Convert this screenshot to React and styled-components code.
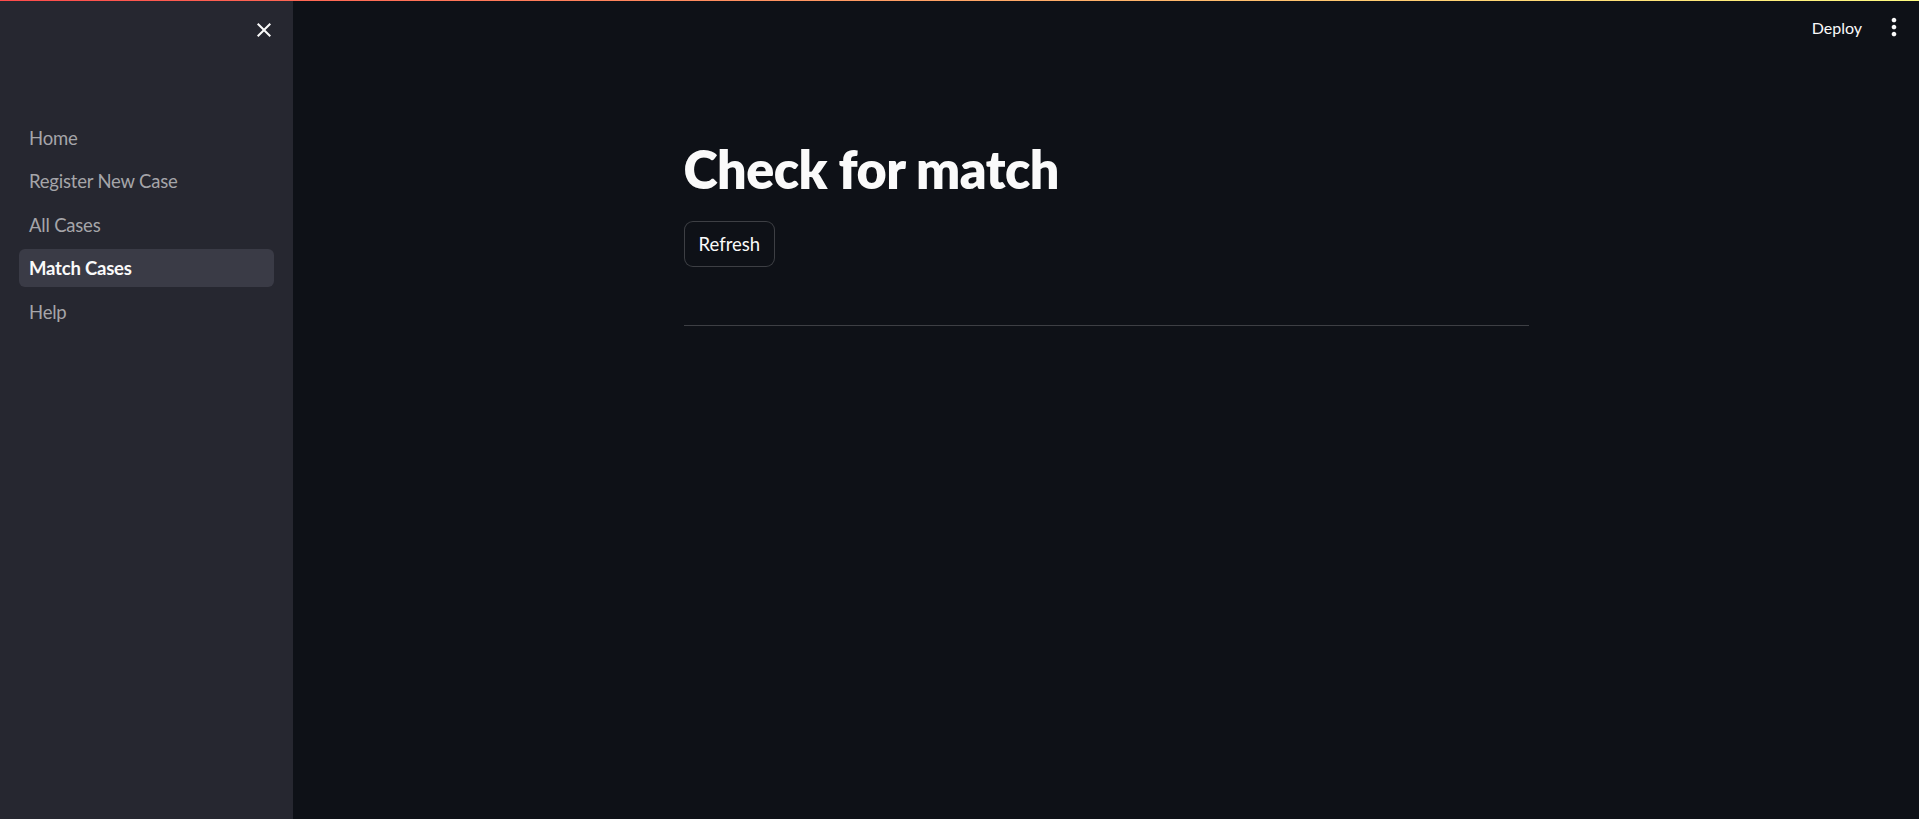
import styled, { createGlobalStyle } from "styled-components";

const GlobalStyle = createGlobalStyle`
  html, body {
    margin: 0;
    padding: 0;
    background: #0e1117;
    font-family: Lato, "Noto Sans", sans-serif;
    color: #fafafa;
  }
  * { box-sizing: border-box; }
`;

const pages = ["Home", "Register New Case", "All Cases", "Match Cases", "Help"];

const StyledShell = styled.div`
  position: relative;
  display: grid;
  grid-template-columns: 293px 1fr;
  height: 100vh;
  overflow: hidden;
`;

const StyledDecoration = styled.div`
  position: absolute;
  top: 0;
  left: 0;
  right: 0;
  height: 1px;
  background: linear-gradient(90deg, #ff4b4b, #fffd80);
  z-index: 5;
`;

const StyledSidebar = styled.aside`
  display: flex;
  flex-direction: column;
  background-color: #262730;
  padding: 0 19px;
`;

const StyledSidebarTop = styled.div`
  display: flex;
  justify-content: flex-end;
  align-items: center;
  height: 60px;
  margin-right: -2px;
`;

const StyledIconButton = styled.button`
  all: unset;
  display: flex;
  align-items: center;
  justify-content: center;
  width: ${(p) => p.$size || 24}px;
  height: ${(p) => p.$size || 24}px;
  cursor: pointer;
  color: #fafafa;
`;

const StyledNav = styled.nav`
  display: flex;
  flex-direction: column;
  gap: 5.4px;
  margin-top: 59px;
`;

const StyledNavLink = styled.a`
  display: flex;
  align-items: center;
  height: 38px;
  padding: 0 10px;
  border-radius: 6px;
  font-size: 18.5px;
  letter-spacing: -0.2px;
  text-decoration: none;
  cursor: pointer;
  color: ${(p) => (p.$active ? "#fafafa" : "#a5a5a9")};
  font-weight: ${(p) => (p.$active ? 700 : 400)};
  background-color: ${(p) => (p.$active ? "#3a3b46" : "transparent")};
  &:hover {
    background-color: #3a3b46;
  }
`;

const StyledMain = styled.main`
  display: flex;
  flex-direction: column;
  min-width: 0;
`;

const StyledHeader = styled.header`
  display: flex;
  justify-content: flex-end;
  align-items: center;
  height: 54px;
  padding-right: 11px;
  gap: 18px;
`;

const StyledDeploy = styled.button`
  all: unset;
  font-family: Lato, "Noto Sans", sans-serif;
  font-size: 16px;
  color: #fafafa;
  cursor: pointer;
`;

const StyledBlock = styled.section`
  width: 845px;
  margin: 0 auto;
  padding-top: 84px;
  display: flex;
  flex-direction: column;
  align-items: flex-start;
`;

const StyledTitle = styled.h1`
  margin: 0;
  font-size: 52px;
  line-height: 1.2;
  font-weight: 800;
  letter-spacing: -0.5px;
`;

const StyledButton = styled.button`
  margin-top: 21px;
  height: 46px;
  padding: 0 14px;
  border: 1px solid rgba(250, 250, 250, 0.2);
  border-radius: 9px;
  background-color: #0e1117;
  color: #fafafa;
  font-family: inherit;
  font-size: 18.5px;
  cursor: pointer;
  &:hover {
    border-color: #ff4b4b;
    color: #ff4b4b;
  }
`;

const StyledDivider = styled.hr`
  align-self: stretch;
  margin: 58px 0 0;
  border: none;
  border-top: 1px solid rgba(250, 250, 250, 0.2);
`;

function CloseIcon() {
  return (
    <svg width="24" height="24" viewBox="0 0 24 24" fill="currentColor">
      <path d="M19 6.41L17.59 5 12 10.59 6.41 5 5 6.41 10.59 12 5 17.59 6.41 19 12 13.41 17.59 19 19 17.59 13.41 12z" />
    </svg>
  );
}

function MoreIcon() {
  return (
    <svg width="28" height="28" viewBox="0 0 24 24" fill="currentColor">
      <path d="M12 8c1.1 0 2-.9 2-2s-.9-2-2-2-2 .9-2 2 .9 2 2 2zm0 2c-1.1 0-2 .9-2 2s.9 2 2 2 2-.9 2-2-.9-2-2-2zm0 6c-1.1 0-2 .9-2 2s.9 2 2 2 2-.9 2-2-.9-2-2-2z" />
    </svg>
  );
}

export default function App() {
  return (
    <>
      <GlobalStyle />
      <StyledShell>
        <StyledDecoration />
        <StyledSidebar>
          <StyledSidebarTop>
            <StyledIconButton aria-label="Close sidebar">
              <CloseIcon />
            </StyledIconButton>
          </StyledSidebarTop>
          <StyledNav>
            {pages.map((page) => (
              <StyledNavLink key={page} $active={page === "Match Cases"}>
                {page}
              </StyledNavLink>
            ))}
          </StyledNav>
        </StyledSidebar>

        <StyledMain>
          <StyledHeader>
            <StyledDeploy>Deploy</StyledDeploy>
            <StyledIconButton as="span" $size={28}>
              <MoreIcon />
            </StyledIconButton>
          </StyledHeader>
          <StyledBlock>
            <StyledTitle>Check for match</StyledTitle>
            <StyledButton>Refresh</StyledButton>
            <StyledDivider />
          </StyledBlock>
        </StyledMain>
      </StyledShell>
    </>
  );
}
